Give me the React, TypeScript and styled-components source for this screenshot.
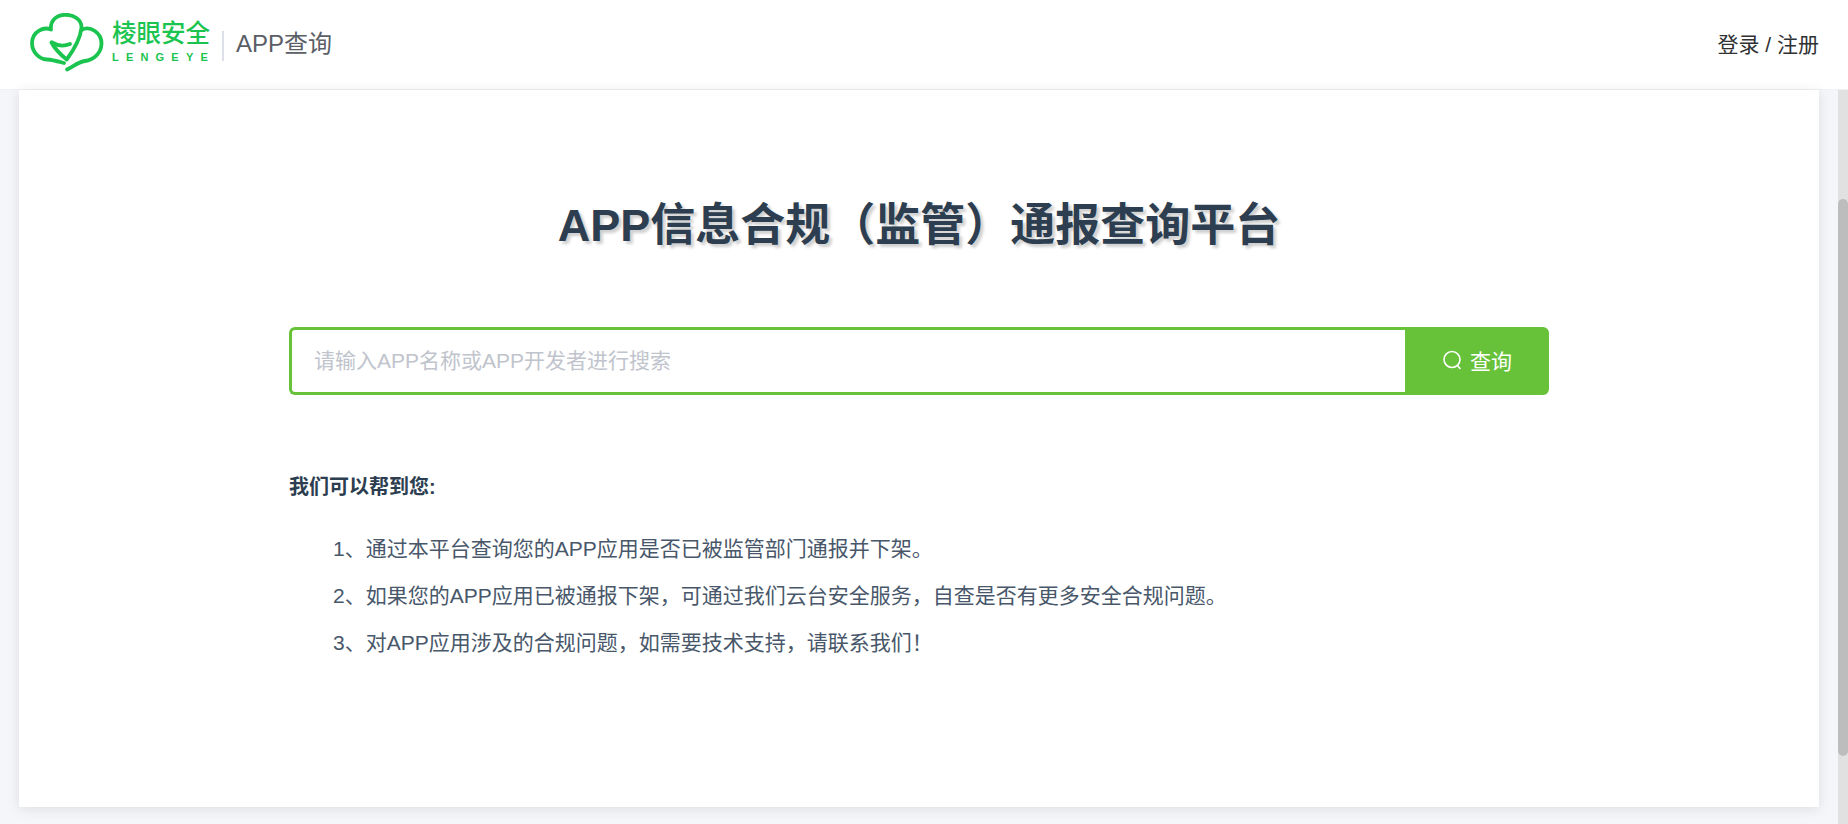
import styled, { createGlobalStyle } from "styled-components"

const CJK = `"Liberation Sans", Arial, "Noto Sans CJK SC", sans-serif`

const GlobalStyle = createGlobalStyle`
  html, body {
    margin: 0;
    height: 100%;
    overflow: hidden;
    background: #f5f6fa;
    font-family: ${CJK};
  }
`

const App = () => {
  return (
    <Page>
      <GlobalStyle />
      <Header>
        <Brand>
          <svg width="74" height="60" viewBox="0 0 74 60" fill="none" stroke="#1bc44f" strokeWidth="3.8" strokeLinecap="round" strokeLinejoin="round">
            <path d="M21.5 29.5 C25 36 31 42 36.7 46.5 C43 38 50 27 51.5 15 C52 7 44 1.5 35 1.8 C26 2 20 8 21 16.5 C14 13.5 2.5 18 2 30 C2 39 9 46 17 46.5 C24 47 30 49 34 50" />
            <path d="M51.5 17 C60 12 72 20 71.5 31 C71 41 63 47 55 48 C48 49 44 53 37 56.5" />
            <path d="M22 29.5 C27 32.5 34 33.5 40 31" />
          </svg>
          <BrandText>
            <BrandName>棱眼安全</BrandName>
            <BrandSub>LENGEYE</BrandSub>
          </BrandText>
          <BrandDivider />
          <BrandTitle>APP查询</BrandTitle>
        </Brand>
        <AuthLink>登录 / 注册</AuthLink>
      </Header>
      <Body>
        <Main>
          <Card>
            <Title>APP信息合规（监管）通报查询平台</Title>
            <SearchRow>
              <SearchInput placeholder="请输入APP名称或APP开发者进行搜索" />
              <SearchButton>
                <svg width="20" height="20" viewBox="0 0 20 20" fill="none" stroke="#fff" strokeWidth="1.6" strokeLinecap="round">
                  <circle cx="10" cy="9.5" r="8" />
                  <path d="M15.5 15.5 L18 18.5" />
                </svg>
                查询
              </SearchButton>
            </SearchRow>
            <Help>
              <HelpTitle>我们可以帮到您:</HelpTitle>
              <HelpList>
                <li>1、通过本平台查询您的APP应用是否已被监管部门通报并下架。</li>
                <li>2、如果您的APP应用已被通报下架，可通过我们云台安全服务，自查是否有更多安全合规问题。</li>
                <li>3、对APP应用涉及的合规问题，如需要技术支持，请联系我们！</li>
              </HelpList>
            </Help>
          </Card>
        </Main>
        <ScrollTrack>
          <ScrollThumb />
        </ScrollTrack>
      </Body>
    </Page>
  )
}

const Page = styled.div`
  height: 100vh;
  display: flex;
  flex-direction: column;
`

const Header = styled.header`
  box-sizing: border-box;
  height: 90px;
  flex: none;
  background: #fff;
  border-bottom: 1px solid #f0f1f4;
  display: flex;
  align-items: center;
  justify-content: space-between;
  padding: 0 29px 2px 30px;
`

const Brand = styled.div`
  display: flex;
  align-items: center;
  margin-bottom: 2px;
`

const BrandText = styled.div`
  display: flex;
  flex-direction: column;
  margin: 0 0 2px 8px;
`

const BrandName = styled.div`
  font-size: 24.5px;
  line-height: 28px;
  font-weight: 500;
  color: #1bc44f;
  white-space: nowrap;
`

const BrandSub = styled.div`
  font-size: 11px;
  line-height: 12px;
  margin-top: 3px;
  font-weight: 700;
  letter-spacing: 7.2px;
  white-space: nowrap;
  width: 98px;
  color: #1bc44f;
`

const BrandDivider = styled.div`
  width: 2px;
  height: 30px;
  background: #dde0e8;
  margin: 6px 12px 0 12px;
`

const BrandTitle = styled.div`
  font-size: 24px;
  color: #5a5e66;
  white-space: nowrap;
  margin-bottom: 2px;
`

const AuthLink = styled.a`
  font-size: 21px;
  color: #303133;
  white-space: nowrap;
  margin-bottom: 2px;
`

const Body = styled.div`
  flex: 1;
  display: flex;
  min-height: 0;
`

const Main = styled.main`
  flex: 1;
  padding: 0 19px;
`

const Card = styled.section`
  box-sizing: border-box;
  height: 717px;
  background: #fff;
  box-shadow: 0 2px 12px 0 rgba(0, 0, 0, 0.1);
  padding: 106px 270px 0;
`

const Title = styled.h1`
  margin: 0;
  text-align: center;
  font-size: 45px;
  line-height: 60px;
  font-weight: 700;
  color: #2c3e50;
  text-shadow: 3px 3px 3px #cfcfcf;
`

const SearchRow = styled.div`
  display: flex;
  height: 68px;
  margin-top: 71px;
`

const SearchInput = styled.input`
  flex: 1;
  min-width: 0;
  box-sizing: border-box;
  border: 3px solid #67c23a;
  border-right: none;
  border-radius: 6px 0 0 6px;
  padding: 0 22px;
  font-size: 21px;
  font-family: ${CJK};
  outline: none;
  &::placeholder {
    color: #c0c4cc;
    opacity: 1;
  }
`

const SearchButton = styled.button`
  width: 144px;
  flex: none;
  border: none;
  padding: 0 0 2px;
  background: #67c23a;
  color: #fff;
  border-radius: 0 6px 6px 0;
  font-size: 21px;
  font-family: ${CJK};
  display: flex;
  align-items: center;
  justify-content: center;
  gap: 8px;
`

const Help = styled.div`
  margin-top: 78px;
  color: #2c3e50;
`

const HelpTitle = styled.div`
  font-size: 20px;
  line-height: 28px;
  font-weight: 700;
`

const HelpList = styled.ol`
  list-style: none;
  margin: 24px 0 0;
  padding: 0 0 0 44px;
  font-size: 21px;
  line-height: 47px;
  color: #48576a;
`

const ScrollTrack = styled.div`
  width: 10px;
  flex: none;
  background: #e1e1e1;
`

const ScrollThumb = styled.div`
  height: 557px;
  margin-top: 109px;
  background: #bdbdbd;
  border-radius: 5px;
`

export default App
